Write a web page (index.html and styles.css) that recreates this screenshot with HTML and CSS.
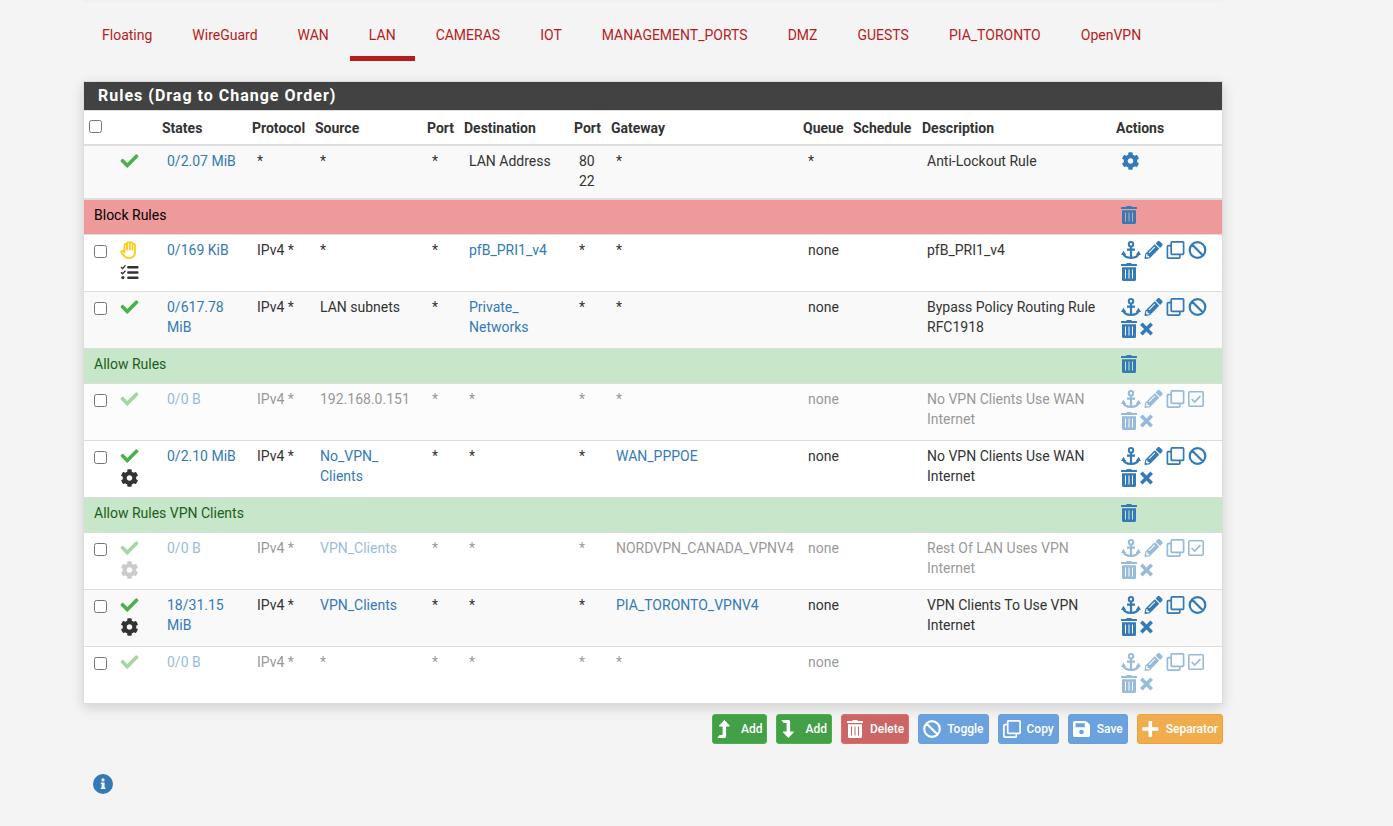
FILE: index.html
```html
<!DOCTYPE html>
<html lang="en">
<head>
    <meta charset="UTF-8">
    <meta name="viewport" content="width=device-width, initial-scale=1.0">
    <title>Firewall: Rules: LAN</title>
    <link rel="stylesheet" href="styles.css">
</head>
<body>

    <!-- Icon shapes shared by the table and the buttons -->
    <svg class="sprite" aria-hidden="true">
        <symbol id="check" viewBox="0 0 512 512">
            <path d="M173.9 439.4l-166.4-166.4c-10-10-10-26.2 0-36.2l36.2-36.2c10-10 26.2-10 36.2 0L192 312.7 432.1 72.6c10-10 26.2-10 36.2 0l36.2 36.2c10 10 10 26.2 0 36.2l-294.4 294.4c-10 10-26.2 10-36.2 0z"/>
        </symbol>
        <symbol id="gear" viewBox="0 0 512 512">
            <path d="M487.4 315.7l-42.6-24.6c4.3-23.2 4.3-47 0-70.2l42.6-24.6c4.9-2.8 7.1-8.6 5.5-14-11.1-35.6-30-67.8-54.7-94.6-3.8-4.1-10-5.1-14.8-2.3L380.8 110c-17.9-15.4-38.5-27.3-60.8-35.1V25.8c0-5.6-3.9-10.5-9.4-11.7-36.7-8.2-74.3-7.8-109.2 0-5.5 1.2-9.4 6.1-9.4 11.7V75c-22.2 7.9-42.8 19.8-60.8 35.1L88.7 85.5c-4.9-2.8-11-1.9-14.8 2.3-24.7 26.7-43.6 58.9-54.7 94.6-1.7 5.4.6 11.2 5.5 14L67.3 221c-4.3 23.2-4.3 47 0 70.2l-42.6 24.6c-4.9 2.8-7.1 8.6-5.5 14 11.1 35.6 30 67.8 54.7 94.6 3.8 4.1 10 5.1 14.8 2.3l42.6-24.6c17.9 15.4 38.5 27.3 60.8 35.1v49.2c0 5.6 3.9 10.5 9.4 11.7 36.7 8.2 74.3 7.8 109.2 0 5.5-1.2 9.4-6.1 9.4-11.7v-49.2c22.2-7.9 42.8-19.8 60.8-35.1l42.6 24.6c4.9 2.8 11 1.9 14.8-2.3 24.7-26.7 43.6-58.9 54.7-94.6 1.5-5.5-.7-11.3-5.6-14.1zM256 336c-44.1 0-80-35.9-80-80s35.9-80 80-80 80 35.9 80 80-35.9 80-80 80z"/>
        </symbol>
        <symbol id="hand" viewBox="0 0 18 18">
            <path fill="none" stroke="currentColor" stroke-width="1.8" stroke-linejoin="round" stroke-linecap="round" d="M4 11.500V4.200a1.300 1.300 0 0 1 2.600 0V2.800a1.300 1.300 0 0 1 2.700-.6 1.300 1.300 0 0 1 2.600.8v1.200a1.300 1.300 0 0 1 2.600 0v7.300a5.500 5.500 0 0 1-5.500 5.600H8.200a5.500 5.500 0 0 1-4.400-2.200L1 11.600a1.300 1.300 0 0 1 1.900-1.700l1.100 1.200M6.600 4v4.600M9.300 2.600v6M11.900 4v4.600"/>
        </symbol>
        <symbol id="list" viewBox="0 0 18 18">
            <path d="M7.5 3h9.7a.8.8 0 0 1 .8.8v1a.8.8 0 0 1-.8.8H7.5a.8.8 0 0 1-.8-.8v-1a.8.8 0 0 1 .8-.8zM7.5 8.3h9.7a.8.8 0 0 1 .8.8v.8a.8.8 0 0 1-.8.8H7.5a.8.8 0 0 1-.8-.8v-.8a.8.8 0 0 1 .8-.8zM7.5 13.4h9.7a.8.8 0 0 1 .8.8v1a.8.8 0 0 1-.8.8H7.5a.8.8 0 0 1-.8-.8v-1a.8.8 0 0 1 .8-.8z"/>
            <circle cx="2.4" cy="14.6" r="1.6"/>
            <path fill="none" stroke="currentColor" stroke-width="1.4" d="M.5 4l1.7 1.6L5 2.4M.5 9.2l1.7 1.6L5 7.6"/>
        </symbol>
        <symbol id="anchor" viewBox="0 0 20 18">
            <path fill="none" stroke="currentColor" stroke-width="2.2" d="M10 5.4V17M6 8.600h8M2.200 12.200c.6 3 3.600 4.600 7.800 4.600s7.200-1.600 7.800-4.600"/>
            <circle cx="10" cy="3.200" r="2.200" fill="none" stroke="currentColor" stroke-width="2"/>
            <path d="M0 14l2.400-4.200L5.200 14zM14.800 14l2.800-4.200L20 14z"/>
        </symbol>
        <symbol id="pencil" viewBox="0 0 512 512">
            <path d="M498 142.100l-46.600 46.600c-4.700 4.700-12.300 4.700-17 0L323.300 77.700c-4.700-4.700-4.700-12.300 0-17l46.600-46.600c18.700-18.700 49.100-18.700 67.900 0l60.100 60.100c18.800 18.700 18.800 49.100.1 67.900zM284.200 99.800L21.600 362.400.4 483.900c-2.900 16.400 11.400 30.600 27.800 27.800l121.500-21.300 262.600-262.600c4.700-4.700 4.700-12.300 0-17l-111-111c-4.800-4.700-12.400-4.700-17.100 0zM124.100 339.900c-5.500-5.500-5.500-14.300 0-19.800l154-154c5.500-5.500 14.300-5.500 19.800 0s5.500 14.300 0 19.800l-154 154c-5.500 5.500-14.300 5.500-19.800 0zM88 424h48v36.300l-64.500 11.300-31.100-31.100L51.700 376H88v48z"/>
        </symbol>
        <symbol id="copy" viewBox="0 0 18 18">
            <path fill="none" stroke="currentColor" stroke-width="1.700" stroke-linejoin="round" d="M5.500.900h10.800a.8.8 0 0 1 .8.8v10.800a.8.8 0 0 1-.8.800h-10.800a.8.8 0 0 1-.8-.8v-10.800a.8.8 0 0 1 .8-.8zM4.700 4.700H1.700a.8.8 0 0 0-.8.800v10.800a.8.8 0 0 0 .8.800h10.800a.8.8 0 0 0 .8-.8v-3"/>
        </symbol>
        <symbol id="ban" viewBox="0 0 18 18">
            <path fill="none" stroke="currentColor" stroke-width="2.200" d="M9 1.200a7.800 7.800 0 1 1 0 15.600a7.800 7.800 0 0 1 0-15.600zM3.500 3.500l11 11"/>
        </symbol>
        <symbol id="square-check" viewBox="0 0 16 18">
            <path fill="none" stroke="currentColor" stroke-width="1.600" stroke-linejoin="round" d="M1.500 1.800h13a.7.7 0 0 1 .7.700v13a.7.7 0 0 1-.7.700h-13a.7.7 0 0 1-.7-.7v-13a.7.7 0 0 1 .7-.7z"/>
            <path fill="none" stroke="currentColor" stroke-width="1.700" d="M3.600 9l3.100 3 5.700-5.900"/>
        </symbol>
        <symbol id="trash" viewBox="0 0 16 18">
            <path fill-rule="evenodd" d="M5.200 1.100L5.700 0h4.600l.5 1.100h4.700c.3 0 .5.200.5.500v1.400H0V1.600c0-.3.200-.5.500-.5zM1 4.200h14v12.300c0 .9-.6 1.500-1.500 1.500H2.500c-.9 0-1.500-.6-1.500-1.500zM4 6.400v9.200h1V6.400zM7.500 6.400v9.200h1V6.400zM11 6.400v9.200h1V6.400z"/>
        </symbol>
        <symbol id="xmark" viewBox="0 0 13 18">
            <path fill="none" stroke="currentColor" stroke-width="3.600" d="M1.300 3.800l10.400 10.400M11.700 3.800l-10.400 10.400"/>
        </symbol>
        <symbol id="turn-up" viewBox="0 0 18 18">
            <path d="M7.400 0l5.200 5.600c.3.400.1.800-.4.800H9.100v9.800c0 1-.7 1.800-1.800 1.800H.8c-.4 0-.5-.3-.2-.6l1.700-2c.2-.2.4-.3.7-.3h2.600V6.400H2.500c-.5 0-.7-.4-.4-.8z"/>
        </symbol>
        <symbol id="turn-down" viewBox="0 0 18 18">
            <path d="M7.400 18l5.200-5.600c.3-.4.1-.8-.4-.8H9.100V1.800C9.100.8 8.400 0 7.300 0H.8C.4 0 .3.300.6.600l1.700 2c.2.200.4.300.7.300h2.600v8.700H2.500c-.5 0-.7.400-.4.800z"/>
        </symbol>
        <symbol id="save" viewBox="0 0 18 18">
            <path fill-rule="evenodd" d="M1.800 1h10.700c.5 0 .9.200 1.200.5l2.800 2.800c.3.300.5.700.5 1.200v9.700c0 1-.8 1.800-1.800 1.800H1.800C.8 17 0 16.200 0 15.200V2.800C0 1.800.8 1 1.800 1zM2.600 3.300v4h9.200v-4zM8.500 9.700a2.300 2.300 0 1 0 0 4.600a2.300 2.300 0 0 0 0-4.600z"/>
        </symbol>
        <symbol id="plus" viewBox="0 0 18 18">
            <path d="M7.500 1h1.600c.6 0 1 .4 1 1v5.200h5.300c.6 0 1 .4 1 1v1.600c0 .6-.4 1-1 1h-5.300V16c0 .6-.4 1-1 1H7.500c-.6 0-1-.4-1-1v-5.200H1.200c-.6 0-1-.4-1-1V8.200c0-.6.4-1 1-1h5.300V2c0-.6.4-1 1-1z"/>
        </symbol>
        <symbol id="info" viewBox="0 0 20 20">
            <path fill-rule="evenodd" d="M10 0a10 10 0 1 1 0 20a10 10 0 0 1 0-20zM10 4.300a1.600 1.600 0 1 0 0 3.200a1.600 1.600 0 0 0 0-3.200zM7.800 8.500v1.600h.8v3.300h-.8V15h4.600v-1.600h-.8V8.500z"/>
        </symbol>
    </svg>

    <div class="top-panel"></div>

    <nav class="tabs">
        <a href="#">Floating</a>
        <a href="#">WireGuard</a>
        <a href="#">WAN</a>
        <a href="#" class="active">LAN</a>
        <a href="#">CAMERAS</a>
        <a href="#">IOT</a>
        <a href="#">MANAGEMENT_PORTS</a>
        <a href="#">DMZ</a>
        <a href="#">GUESTS</a>
        <a href="#">PIA_TORONTO</a>
        <a href="#">OpenVPN</a>
    </nav>

    <form action="#" method="post">
        <section class="panel">
            <h2>Rules (Drag to Change Order)</h2>
            <table>
                <colgroup>
                    <col class="c-box"><col class="c-icons"><col class="c-states"><col class="c-proto"><col class="c-source"><col class="c-port"><col class="c-dest"><col class="c-port"><col class="c-gateway"><col class="c-queue"><col class="c-schedule"><col><col class="c-actions">
                </colgroup>
                <thead>
                    <tr>
                        <th><input type="checkbox" aria-label="Select all"></th>
                        <th></th>
                        <th>States</th>
                        <th>Protocol</th>
                        <th>Source</th>
                        <th>Port</th>
                        <th>Destination</th>
                        <th>Port</th>
                        <th>Gateway</th>
                        <th>Queue</th>
                        <th>Schedule</th>
                        <th>Description</th>
                        <th>Actions</th>
                    </tr>
                </thead>
                <tbody>
                    <tr>
                        <td></td>
                        <td><div class="icons"><svg class="icon pass"><use href="#check"/></svg></div></td>
                        <td><a href="#">0/2.07 MiB</a></td>
                        <td>*</td>
                        <td>*</td>
                        <td>*</td>
                        <td>LAN Address</td>
                        <td>80<br>22</td>
                        <td>*</td>
                        <td>*</td>
                        <td></td>
                        <td>Anti-Lockout Rule</td>
                        <td><div class="icons"><a href="#" aria-label="Settings"><svg class="icon"><use href="#gear"/></svg></a></div></td>
                    </tr>
                </tbody>
                <tbody>
                    <tr class="separator red">
                        <td colspan="12">Block Rules</td>
                        <td><div class="icons"><a href="#" aria-label="Delete"><svg class="icon narrow"><use href="#trash"/></svg></a></div></td>
                    </tr>
                    <tr>
                        <td><input type="checkbox" aria-label="Select rule"></td>
                        <td><div class="icons"><svg class="icon block"><use href="#hand"/></svg><svg class="icon"><use href="#list"/></svg></div></td>
                        <td><a href="#">0/169 KiB</a></td>
                        <td>IPv4 *</td>
                        <td>*</td>
                        <td>*</td>
                        <td><a href="#">pfB_PRI1_v4</a></td>
                        <td>*</td>
                        <td>*</td>
                        <td>none</td>
                        <td></td>
                        <td>pfB_PRI1_v4</td>
                        <td>
                            <div class="icons">
                                <a href="#" aria-label="Move here"><svg class="icon wide"><use href="#anchor"/></svg></a>
                                <a href="#" aria-label="Edit"><svg class="icon"><use href="#pencil"/></svg></a>
                                <a href="#" aria-label="Copy"><svg class="icon"><use href="#copy"/></svg></a>
                                <a href="#" aria-label="Disable"><svg class="icon"><use href="#ban"/></svg></a>
                                <a href="#" aria-label="Delete"><svg class="icon narrow"><use href="#trash"/></svg></a>
                            </div>
                        </td>
                    </tr>
                    <tr>
                        <td><input type="checkbox" aria-label="Select rule"></td>
                        <td><div class="icons"><svg class="icon pass"><use href="#check"/></svg></div></td>
                        <td><a href="#">0/617.78 MiB</a></td>
                        <td>IPv4 *</td>
                        <td>LAN subnets</td>
                        <td>*</td>
                        <td><a href="#">Private_<wbr>Networks</a></td>
                        <td>*</td>
                        <td>*</td>
                        <td>none</td>
                        <td></td>
                        <td>Bypass Policy Routing Rule RFC1918</td>
                        <td>
                            <div class="icons">
                                <a href="#" aria-label="Move here"><svg class="icon wide"><use href="#anchor"/></svg></a>
                                <a href="#" aria-label="Edit"><svg class="icon"><use href="#pencil"/></svg></a>
                                <a href="#" aria-label="Copy"><svg class="icon"><use href="#copy"/></svg></a>
                                <a href="#" aria-label="Disable"><svg class="icon"><use href="#ban"/></svg></a>
                                <a href="#" aria-label="Delete"><svg class="icon narrow"><use href="#trash"/></svg></a>
                                <a href="#" aria-label="Kill states"><svg class="icon thin"><use href="#xmark"/></svg></a>
                            </div>
                        </td>
                    </tr>
                    <tr class="separator green">
                        <td colspan="12">Allow Rules</td>
                        <td><div class="icons"><a href="#" aria-label="Delete"><svg class="icon narrow"><use href="#trash"/></svg></a></div></td>
                    </tr>
                    <tr class="disabled">
                        <td><input type="checkbox" aria-label="Select rule"></td>
                        <td><div class="icons"><svg class="icon pass"><use href="#check"/></svg></div></td>
                        <td><a href="#">0/0 B</a></td>
                        <td>IPv4 *</td>
                        <td>192.168.0.151</td>
                        <td>*</td>
                        <td>*</td>
                        <td>*</td>
                        <td>*</td>
                        <td>none</td>
                        <td></td>
                        <td>No VPN Clients Use WAN Internet</td>
                        <td>
                            <div class="icons">
                                <a href="#" aria-label="Move here"><svg class="icon wide"><use href="#anchor"/></svg></a>
                                <a href="#" aria-label="Edit"><svg class="icon"><use href="#pencil"/></svg></a>
                                <a href="#" aria-label="Copy"><svg class="icon"><use href="#copy"/></svg></a>
                                <a href="#" aria-label="Enable"><svg class="icon narrow"><use href="#square-check"/></svg></a>
                                <a href="#" aria-label="Delete"><svg class="icon narrow"><use href="#trash"/></svg></a>
                                <a href="#" aria-label="Kill states"><svg class="icon thin"><use href="#xmark"/></svg></a>
                            </div>
                        </td>
                    </tr>
                    <tr>
                        <td><input type="checkbox" aria-label="Select rule"></td>
                        <td><div class="icons"><svg class="icon pass"><use href="#check"/></svg><svg class="icon"><use href="#gear"/></svg></div></td>
                        <td><a href="#">0/2.10 MiB</a></td>
                        <td>IPv4 *</td>
                        <td><a href="#">No_VPN_<wbr>Clients</a></td>
                        <td>*</td>
                        <td>*</td>
                        <td>*</td>
                        <td><a href="#">WAN_PPPOE</a></td>
                        <td>none</td>
                        <td></td>
                        <td>No VPN Clients Use WAN Internet</td>
                        <td>
                            <div class="icons">
                                <a href="#" aria-label="Move here"><svg class="icon wide"><use href="#anchor"/></svg></a>
                                <a href="#" aria-label="Edit"><svg class="icon"><use href="#pencil"/></svg></a>
                                <a href="#" aria-label="Copy"><svg class="icon"><use href="#copy"/></svg></a>
                                <a href="#" aria-label="Disable"><svg class="icon"><use href="#ban"/></svg></a>
                                <a href="#" aria-label="Delete"><svg class="icon narrow"><use href="#trash"/></svg></a>
                                <a href="#" aria-label="Kill states"><svg class="icon thin"><use href="#xmark"/></svg></a>
                            </div>
                        </td>
                    </tr>
                    <tr class="separator green">
                        <td colspan="12">Allow Rules VPN Clients</td>
                        <td><div class="icons"><a href="#" aria-label="Delete"><svg class="icon narrow"><use href="#trash"/></svg></a></div></td>
                    </tr>
                    <tr class="disabled">
                        <td><input type="checkbox" aria-label="Select rule"></td>
                        <td><div class="icons"><svg class="icon pass"><use href="#check"/></svg><svg class="icon faint"><use href="#gear"/></svg></div></td>
                        <td><a href="#">0/0 B</a></td>
                        <td>IPv4 *</td>
                        <td><a href="#">VPN_Clients</a></td>
                        <td>*</td>
                        <td>*</td>
                        <td>*</td>
                        <td>NORDVPN_CANADA_VPNV4</td>
                        <td>none</td>
                        <td></td>
                        <td>Rest Of LAN Uses VPN Internet</td>
                        <td>
                            <div class="icons">
                                <a href="#" aria-label="Move here"><svg class="icon wide"><use href="#anchor"/></svg></a>
                                <a href="#" aria-label="Edit"><svg class="icon"><use href="#pencil"/></svg></a>
                                <a href="#" aria-label="Copy"><svg class="icon"><use href="#copy"/></svg></a>
                                <a href="#" aria-label="Enable"><svg class="icon narrow"><use href="#square-check"/></svg></a>
                                <a href="#" aria-label="Delete"><svg class="icon narrow"><use href="#trash"/></svg></a>
                                <a href="#" aria-label="Kill states"><svg class="icon thin"><use href="#xmark"/></svg></a>
                            </div>
                        </td>
                    </tr>
                    <tr>
                        <td><input type="checkbox" aria-label="Select rule"></td>
                        <td><div class="icons"><svg class="icon pass"><use href="#check"/></svg><svg class="icon"><use href="#gear"/></svg></div></td>
                        <td><a href="#">18/31.15 MiB</a></td>
                        <td>IPv4 *</td>
                        <td><a href="#">VPN_Clients</a></td>
                        <td>*</td>
                        <td>*</td>
                        <td>*</td>
                        <td><a href="#">PIA_TORONTO_VPNV4</a></td>
                        <td>none</td>
                        <td></td>
                        <td>VPN Clients To Use VPN Internet</td>
                        <td>
                            <div class="icons">
                                <a href="#" aria-label="Move here"><svg class="icon wide"><use href="#anchor"/></svg></a>
                                <a href="#" aria-label="Edit"><svg class="icon"><use href="#pencil"/></svg></a>
                                <a href="#" aria-label="Copy"><svg class="icon"><use href="#copy"/></svg></a>
                                <a href="#" aria-label="Disable"><svg class="icon"><use href="#ban"/></svg></a>
                                <a href="#" aria-label="Delete"><svg class="icon narrow"><use href="#trash"/></svg></a>
                                <a href="#" aria-label="Kill states"><svg class="icon thin"><use href="#xmark"/></svg></a>
                            </div>
                        </td>
                    </tr>
                    <tr class="disabled">
                        <td><input type="checkbox" aria-label="Select rule"></td>
                        <td><div class="icons"><svg class="icon pass"><use href="#check"/></svg></div></td>
                        <td><a href="#">0/0 B</a></td>
                        <td>IPv4 *</td>
                        <td>*</td>
                        <td>*</td>
                        <td>*</td>
                        <td>*</td>
                        <td>*</td>
                        <td>none</td>
                        <td></td>
                        <td></td>
                        <td>
                            <div class="icons">
                                <a href="#" aria-label="Move here"><svg class="icon wide"><use href="#anchor"/></svg></a>
                                <a href="#" aria-label="Edit"><svg class="icon"><use href="#pencil"/></svg></a>
                                <a href="#" aria-label="Copy"><svg class="icon"><use href="#copy"/></svg></a>
                                <a href="#" aria-label="Enable"><svg class="icon narrow"><use href="#square-check"/></svg></a>
                                <a href="#" aria-label="Delete"><svg class="icon narrow"><use href="#trash"/></svg></a>
                                <a href="#" aria-label="Kill states"><svg class="icon thin"><use href="#xmark"/></svg></a>
                            </div>
                        </td>
                    </tr>
                </tbody>
            </table>
        </section>

        <div class="buttons">
            <button type="button" class="add"><svg class="icon"><use href="#turn-up"/></svg>Add</button>
            <button type="button" class="add"><svg class="icon"><use href="#turn-down"/></svg>Add</button>
            <button type="button" class="delete"><svg class="icon"><use href="#trash"/></svg>Delete</button>
            <button type="button" class="primary"><svg class="icon"><use href="#ban"/></svg>Toggle</button>
            <button type="button" class="primary"><svg class="icon"><use href="#copy"/></svg>Copy</button>
            <button type="button" class="primary"><svg class="icon"><use href="#save"/></svg>Save</button>
            <button type="button" class="warning"><svg class="icon"><use href="#plus"/></svg>Separator</button>
        </div>
    </form>

    <a href="#" class="info" aria-label="Information"><svg class="info-icon"><use href="#info"/></svg></a>

</body>
</html>
```
FILE: styles.css
```css
* {
    box-sizing: border-box;
}

body {
    margin: 0;
    padding: 0 170px 0 83px;
    background-color: #f4f4f4;
    color: #333;
    font-family: Roboto, sans-serif;
    font-size: 14px;
    line-height: 20px;
}

a {
    color: #337ab7;
    text-decoration: none;
}

.sprite {
    display: none;
}

/* Bottom edge of the panel above the tabs */
.top-panel {
    height: 1px;
    background-color: #f0f0f0;
    box-shadow: 0 1px 2px rgba(0, 0, 0, 0.03);
}

.tabs {
    display: flex;
    gap: 2px;
    margin-bottom: 20px;
}

.tabs a {
    padding: 24px 19px 11px;
    border-bottom: 5px solid transparent;
    color: #b71c1c;
}

.tabs a.active {
    border-bottom-color: #b71c1c;
}

.panel {
    border: 1px solid #ddd;
    background-color: #fff;
    box-shadow: 0 4px 12px rgba(0, 0, 0, 0.15);
}

.panel h2 {
    margin: 0;
    padding: 4px 14px;
    border-bottom: 1px solid #ddd;
    background-color: #424242;
    background-clip: padding-box;
    color: #fff;
    font-size: 16px;
    font-weight: 700;
    letter-spacing: 1px;
}

table {
    width: 100%;
    table-layout: fixed;
    border-collapse: collapse;
}

.c-box { width: 26px; }
.c-icons { width: 47px; }
.c-states { width: 90px; }
.c-proto { width: 63px; }
.c-source { width: 112px; }
.c-port { width: 37px; }
.c-dest { width: 110px; }
.c-gateway { width: 192px; }
.c-queue { width: 50px; }
.c-schedule { width: 69px; }
.c-actions { width: 111px; }

th {
    padding: 7px 5px 6px;
    border-bottom: 2px solid #ddd;
    font-weight: 700;
    text-align: left;
    vertical-align: top;
}

td {
    padding: 5px 10px 7px;
    border-top: 1px solid #ddd;
    vertical-align: top;
    white-space: nowrap;
}

td:nth-child(3),
td:nth-child(5),
td:nth-child(7),
td:nth-child(12) {
    white-space: normal;
}

tbody + tbody {
    border-top: 2px solid #ddd;
}

tbody tr:nth-child(odd) {
    background-color: #f9f9f9;
}

input[type="checkbox"] {
    display: block;
    width: 13px;
    height: 13px;
    margin: 2px 0 0;
}

td input[type="checkbox"] {
    margin-top: 5px;
}

tbody tr.disabled:nth-child(odd) {
    background-color: #fcfcfc;
}

.disabled td:nth-child(n+2) {
    opacity: 0.5;
}

tbody .separator.red {
    background-color: #ef9a9a;
    color: #000;
}

tbody .separator.green {
    background-color: #c8e6c9;
    color: #1b5e20;
}

.icons {
    display: flex;
    flex-wrap: wrap;
    gap: 4px 3px;
    padding: 1px 0 3px;
}

.icons a {
    display: flex;
}

.icon {
    width: 19px;
    height: 18px;
    fill: currentColor;
}

.icon.wide { width: 20px; }
.icon.narrow { width: 16px; }
.icon.thin { width: 13px; }
.icon.pass { color: #4caf50; }
.icon.block { color: #ffca1a; }
.icon.faint { opacity: 0.5; }

.buttons {
    display: flex;
    justify-content: flex-end;
    gap: 9px;
    margin-top: 10px;
}

button {
    display: flex;
    align-items: center;
    gap: 6px;
    height: 30px;
    padding: 0 4px;
    border: 1px solid;
    border-radius: 3px;
    color: #fff;
    font-family: inherit;
    font-size: 12px;
    font-weight: 500;
    cursor: pointer;
}

button .icon {
    width: 18px;
}

button.add {
    border-color: #4caf50;
    background-color: #43a047;
}

button.delete {
    border-color: #d9706f;
    background-color: #cc6666;
}

button.primary {
    border-color: #6f9fd0;
    background-color: #69a2de;
}

button.warning {
    border-color: #eea236;
    background-color: #f0ad4e;
}

.info {
    display: inline-flex;
    margin: 30px 0 0 10px;
}

.info-icon {
    width: 20px;
    height: 20px;
    fill: currentColor;
}
```
